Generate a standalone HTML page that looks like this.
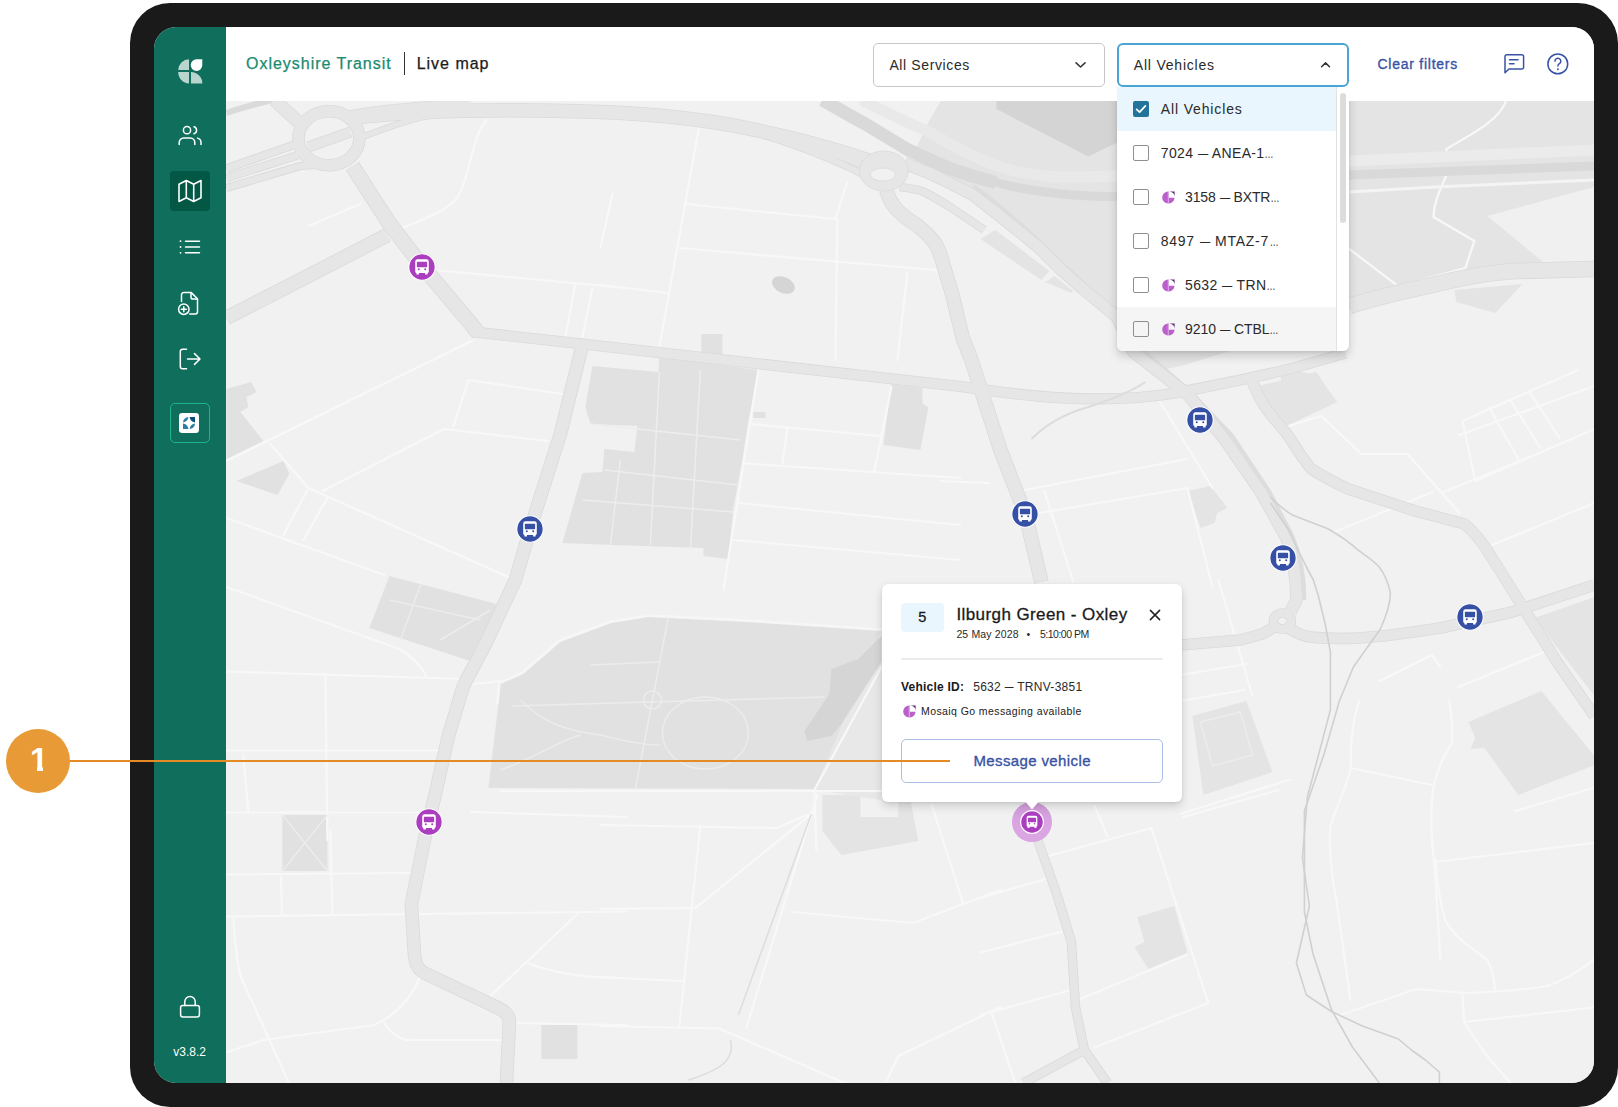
<!DOCTYPE html>
<html lang="en">
<head>
<meta charset="utf-8">
<title>Oxleyshire Transit – Live map</title>
<style>
*{box-sizing:border-box;margin:0;padding:0}
html,body{width:1618px;height:1107px;overflow:hidden;background:#fff}
body{position:relative;font-family:"Liberation Sans",Arial,sans-serif;color:#222}
.abs{position:absolute}
#bezel{position:absolute;left:129.6px;top:3px;width:1488px;height:1104px;background:#1a1a1a;border-radius:40px}
#screen{position:absolute;left:153.6px;top:27px;width:1440.4px;height:1056px;border-radius:22px;overflow:hidden;background:#f1f1f1}
#pg{position:absolute;left:-153.6px;top:-27px;width:1618px;height:1107px}
#sidebar{position:absolute;left:0;top:0;width:72px;height:1056px;background:#0f6e5c}
#header{position:absolute;left:72px;top:0;width:1369px;height:74px;background:#fff}
.t{position:absolute;white-space:nowrap;line-height:1}
.d{display:inline-block;transform:scaleX(.73);margin:0 -0.135em}
.e{display:inline-block;transform:scaleX(.64);margin:0 -0.18em}
.cb{position:absolute;left:16px;width:16px;height:16px;border:1px solid #8f8f8f;border-radius:2px}
#callout{position:absolute;left:6.1px;top:729.1px;width:63.8px;height:63.8px;border-radius:50%;background:#e89a37}
#cline{position:absolute;left:68px;top:760.1px;width:882px;height:2px;background:#e48b24}
</style>
</head>
<body>
<div id="bezel"></div>
<div id="screen">
<svg id="mapsvg" style="position:absolute;left:0;top:0" width="1440.4" height="1056" viewBox="153.6 27 1440.4 1056">
<rect x="225" y="100" width="1370" height="984" fill="#f1f1f1"/>
<!-- ===== zones ===== -->
<g fill="#e4e4e4">
 <!-- NE dark industrial zone -->
 <path d="M941 100 L1594 100 L1594 268 C1560 268 1520 270 1480 276 C1420 286 1380 300 1340 312 C1290 330 1230 352 1180 366 L1150 372 L1133 352 L1116 317 L1082 289 L1060 269 L1038 247 L1017 230 L995 213 L973 195 L930 174 L915 150 L928 122 Z"/>
 <path d="M1254 387 L1316 372 L1336 402 L1284 427 Z"/>
 <path d="M1280 367 L1315 375 L1337 402 L1283 427 Z"/>
 <path d="M1454 290 L1522 284 L1495 313 L1456 302 Z"/>
 <path d="M1534 618 L1594 597 L1594 696 Z"/>
 <path d="M1468 722 L1541 691 L1594 756 L1594 765 L1518 795 L1484 748 L1470 749 L1475 738 Z"/>
 <path d="M1192 716 L1246 701 L1272 772 L1203 795 Z"/>
 <path d="M1137 917 L1174 906 L1187 953 L1148 969 L1134 947 L1144 942 Z"/>
 <path d="M1188 491 L1210 486 L1227 508 L1217 513 L1214 523 L1200 528 Z"/>
 <path d="M822 795 L860 795 L860 817 L898 817 L898 795 L909 795 L918 841 L841 855 L822 831 Z"/>
 <path d="M980 239 L995 230 L1049 271 L1041 280 Z"/>
 <path d="M1045 282 L1054 276 L1073 291 L1071 293 Z"/>
</g>
<!-- lighter polygon inside NE zone -->
<path d="M1487 216 L1594 187 L1594 268 L1544 263 Z" fill="#f0f0f0"/>
<!-- darker polygon in NE zone -->
<path d="M996 100 L1118 100 L1118 142 L1088 156.5 L996 109 Z" fill="#d4d4d4"/>
<g fill="#e1e1e1">
 <!-- campus -->
 <path d="M592 366 L658 372 L659 357 L758 370 L755 387 L748 421 L742 459 L733 508 L728 559 L703 556 L703 548 L612 545 L562 543 L582 473 L602 472 L604 449 L634 452 L637 426 L590 424 L585 407 Z"/>
 <path d="M701 334 L722 334 L722 354 L701 354 Z"/>
 <path d="M891 384 L922 388 L922 404 L928 407 L920 450 L883 445 Z"/>
 <path d="M753 412 L765 412 L765 418 L753 418 Z"/>
 <!-- west blocks -->
 <path d="M226 389 L251 382 L256 392 L246 397 L248 407 L240 412 L263 441 L226 459 Z"/>
 <path d="M236 481 L283 461 L289 474 L277 495 Z"/>
 <!-- cemetery -->
 <path d="M389 576 L500 605 L473 662 L369 628 Z"/>
 <!-- park -->
 <path d="M488 788 L498 704 L500 684 L523 674 L560 642 L611 623 L648 617 L747 622 L881 631 L846 719 L819 778 L814 789 Z"/>
 <path d="M881 631 L881 800 L814 790 Z" fill="#e8e8e8"/>
 <!-- X square -->
 <path d="M282 815 L327 815 L327 871 L282 871 Z"/>
 <path d="M541 1025 L577 1025 L577 1059 L541 1059 Z"/>
</g>
<!-- water -->
<g fill="#d5d5d5">
 <path d="M881 636 L881 662 L841 724 L831 736 L807 741 L804 731 L829 694 L831 669 L858 659 Z"/>
 <ellipse cx="783" cy="285" rx="12" ry="8" transform="rotate(25 783 285)"/>
</g>
<!-- ===== light minor streets ===== -->
<g fill="none" stroke="#f8f8f8" stroke-width="2.2" stroke-linecap="round" stroke-linejoin="round">
 <path d="M486 120 C470 140 470 180 455 200 C440 215 415 222 399 229"/>
 <path d="M439 270.5 L572 283 L626 288 M575 283 L565 337 M592 288 L582 337 M308 226 L360 204"/>
 <path d="M699 125 L659 347 M686 204 L835 219 L847 182 M679 248 L946 271 M600 285 L667 293 M837 219 L835 360 M907 273 L897 360 M612 194 L600 248"/>
 <path d="M226 461 L473 340"/>
 <path d="M322 491 L444 429 L547 441 M270 444 L308 488 L508 577 M226 518 L384 575 M468 380 L562 394 M468 380 L453 426 M308 488 L283 535 M327 498 L303 540"/>
 <path d="M758 370 L723 590 M750 424 L881 436 M745 463.5 L960 478 M738 503 L960 525 M733 540 L960 560 M891 387 L874 471 M787 429 L782 463"/>
 <path d="M1019 491 L1187 459 M1039 513 L1187 488 M1158 399 L1212 488 M1187 488 L1212 587 M1044 491 L1073 582 M940 481 L989 483"/>
 <path d="M1462 421 L1578 370 M1459 435 L1594 386 M1475 481 L1594 429 M1443 492 L1551 448 M1462 421 L1475 481 M1489 408 L1518 459 M1510 400 L1540 448 M1529 391.5 L1559 438"/>
 <path d="M1285 427 L1321 416 L1361 454 L1407 454 L1459 513 M1489 546 L1594 503 M1334 532 L1432 492"/>
 <path d="M226 671.5 L463 679 M325 674 L327 840 M226 750.5 L441 750.5 M243 755.5 L248 812 M226 812.5 L424 812.5"/>
 <path d="M226 587 L399 649 C410 655 420 665 426 676 M473 684 L500 681 M471 812 L626 817"/>
 <path d="M500 791 L1180 791"/>
 <path d="M497 703 L499 683 L522 672.5 L559 640.5 L610.5 621.5 L648 615.5 L747 620.5 L881 629.5" stroke-width="2.6" stroke="#f6f6f6"/>
 <path d="M881 667 L814 790 L816 850"/>
 <path d="M226 874.5 L411 873 M226 916.5 L626 911.5 M330 830 L332 914 M280.5 874.5 L281.5 914 M233 919 C235 950 238 970 241 978 L288 1082"/>
 <path d="M226 1052.5 L263 1040 L374 1025 C395 1015 410 1000 419 978 M384 1023 C390 1033 400 1040 409 1040 L503 1040 M515 1023 L626 1025 M488 998 L577 914 M528 963.5 C560 975 590 978 626 978"/>
 <path d="M600 825 L776 828 L814 812 M700 825 L679 1026 M600 909 L695 908 L811 814 M600 977 L681 981 M600 1026 L719 1028.5 L844 1083"/>
 <path d="M817 795 L746 1028 M792 912 L912 923 L1000 890 M931 804 L963 904 M1000 1007 L898 1056 L885 1083"/>
 <path d="M1048 856 L1151 828 L1208 1003 L1094 1047.5 M1183 817 L1278 790 M1080 999 L1186 955 M980 898 L1045 879 M980 952.5 L1064 931 M980 1015 L1069 990.5 M1094 806 L1107 836 M991 1012 L1015 1083"/>
 <path d="M1218 580 L1252 696 M1180 675 L1246.5 664 M1180 701 L1244 690 M1180 814 L1290 779.5"/>
 <path d="M1379.5 681 L1431.5 655 L1440 667 M1457.5 687 L1544 652 M1449 701 C1452 720 1452 730 1452 742 C1440 760 1433 780 1431.5 800 C1430 830 1432 850 1434 863 L1440 960 M1434 862 L1593 843 M1515 811 L1593 788"/>
 <path d="M1359 701 C1352 720 1350 745 1350.5 768 C1345 790 1335 810 1330 826 C1328 850 1332 880 1336 900 L1350 1000 M1350.5 768 L1431.5 785"/>
 <path d="M1435 860 C1438 890 1440 905 1445 920 C1455 940 1475 950 1487 960 C1492 970 1494 980 1495 991 M1464 993 C1500 992 1520 990 1545 986.5 C1565 980 1580 970 1593 960 M1462 995 L1464 1022 L1593 1007.5 M1464 1022 C1475 1040 1485 1055 1497 1068 L1510 1083 M1337 1016 L1416 989 L1464 993"/>
 <!-- NE zone white paths -->
 <path d="M1506 100 C1500 120 1470 135 1446 149 L1446 160 M1446 175 C1440 190 1434 200 1433 217 L1474 241 L1465 268 L1395 287 M1349 249 L1395 284"/>
</g>
<!-- park paths -->
<g fill="none" stroke="#ececec" stroke-width="1.5">
 <path d="M668 617 L635 789"/>
 <path d="M512 706 L824 697"/>
 <circle cx="652" cy="700" r="9"/>
 <ellipse cx="705" cy="733" rx="43" ry="36"/>
 <path d="M520 700 C540 720 560 730 600 735 C620 740 640 745 660 745"/>
 <path d="M500 770 C530 760 560 740 580 735"/>
 <path d="M590 665 L660 662"/>
 <path d="M282 815 L327 871 M327 815 L282 871"/>
 <path d="M389 600 L480 620 M420 585 L400 640 M440 640 L490 610"/>
 <path d="M1200 722 L1240 712 L1252 755 L1212 766 Z"/>
</g>
<!-- campus paths -->
<g fill="none" stroke="#ededed" stroke-width="1.5">
 <path d="M659 372 L650 545"/>
 <path d="M590 424 L740 440"/>
 <path d="M604 470 L738 485"/>
 <path d="M582 500 L733 512"/>
 <path d="M700 370 L690 550"/>
 <path d="M620 460 L610 545"/>
</g>

<g fill="none" stroke-linecap="butt" stroke-linejoin="round">
<path d="M226 113 C240 108 255 104 272 100" stroke="#dadada" stroke-width="6"/>
<path d="M861 100 C885 112 905 122 930 132.5 C950 145 965 152 973 156 C990 164 1005 169 1017 171.5 C1035 175 1050 177 1060 177 C1080 177 1100 176.5 1117 176 L1349 161" stroke="#e9e9e9" stroke-width="11"/>
<path d="M822 100 C840 110 850 116 865 124 C880 133 895 142 908 150 C925 158 940 165 952 169.5 C968 175 982 179 995 182.5" stroke="#d9d9d9" stroke-width="13"/>
<path d="M990 181 C1005 185 1022 189 1038 191 C1055 193.5 1070 195 1082 195.5 C1095 196.5 1105 196.5 1117 196.5 L1349 175" stroke="#d9d9d9" stroke-width="9"/>
<path d="M1349 161 L1594 150" stroke="#ebebeb" stroke-width="11"/>
<path d="M1349 175 L1594 166" stroke="#d9d9d9" stroke-width="9"/>
<path d="M1349 192 L1435 187 L1594 180" stroke="#f4f4f4" stroke-width="3"/>
<path d="M973 186 C1000 205 1030 232 1060 262 C1085 285 1100 300 1120 318 L1140 348 L1187 389 L1232 436 L1268 490 L1292 536 C1302 560 1304 585 1304 600" stroke="#dddddd" stroke-width="4"/>
<path d="M352 166 L357 174 L389 223.5 L422.5 267 L469.5 322.5 L478.5 334" stroke="#dadada" stroke-width="15.6"/>
<path d="M474 332 L560 341.5 L760 364 L960 386.5 L1000 392 C1060 400 1120 402 1175 393 C1210 386 1260 377 1300 366 L1345 353" stroke="#dadada" stroke-width="11.1"/>
<path d="M226 318 L300 280 L387 235" stroke="#dadada" stroke-width="14.6"/>
<path d="M582 345 L560 434 L530 528 L515 580 L486 642 L463 686 L448 736 L434 798 L426 830 L411 904 L414 954 C415 965 418 970 424 973 L498 1008 C506 1012 509 1016 509 1022 L506 1083" stroke="#dadada" stroke-width="13.6"/>
<path d="M350 118 C420 110 500 108.5 600 112 C680 115 725 123 760 131 C790 138 820 147 840 153 L866 163" stroke="#dadada" stroke-width="14.6"/>
<path d="M770 130 C800 136 835 146 872 158" stroke="#dadada" stroke-width="7.6"/>
<path d="M770 137 C800 147 830 158 862 174" stroke="#dadada" stroke-width="7.6"/>
<path d="M886 190 C888 198 891 203 895.5 208.5 C902 216 910 221 917 225.5 C924 231 930 237 934.5 243 C939 250 941 257 943 265 L952 295 L962.5 338.5 L971 360 L1000 450 L1025 514 L1041 582" stroke="#dadada" stroke-width="14.6"/>
<path d="M899 187 C908 188 915 189 921.5 191 C932 196 942 202 952 208.5 L984 230" stroke="#dadada" stroke-width="8.6"/>
<path d="M904 163 C913 167 921 170 930 173.5 C945 181 960 188 973.5 195.5 L995 212.5 L1017 230 L1038.5 247.5 L1060 269 L1082 288.5 L1116.5 317 L1133 352 L1187 394 L1224 439 L1261 493 L1286 538 C1294 560 1296 580 1296 600 L1290 612" stroke="#dadada" stroke-width="12.6"/>
<path d="M1251 379 C1255 390 1260 400 1267 410.5 C1273 418 1279 425 1285.5 432.5 C1294 445 1299 453 1304 460 C1306 463 1308 466 1311 469 C1325 478 1335 483 1348 489 L1415 511 L1464 524 C1474 532 1484 545 1491 557 L1518 600 L1556 661 L1594 716" stroke="#dadada" stroke-width="11.6"/>
<path d="M1180 645 L1240 640 L1262 634 L1274 627 M1288 628 C1296 633 1302 636 1310 637 C1340 640 1360 638 1382 636 C1400 634 1420 631 1440 628 L1512 612 L1594 585" stroke="#dadada" stroke-width="11.6"/>
<path d="M1032 825 L1056 893 L1071 942 L1075 1007 L1084 1050 L1107 1083 M1084 1050 L1023 1083" stroke="#dadada" stroke-width="9.6"/>
<path d="M1349 306 C1380 296 1410 290 1436 284 C1465 277 1490 272 1517 271 L1594 269" stroke="#dadada" stroke-width="16.6"/>
<path d="M226 168.5 L296 144" stroke="#dadada" stroke-width="8.6"/>
<path d="M226 178 L298 155" stroke="#dadada" stroke-width="8.6"/>
<path d="M226 188 L300 166 L345 163" stroke="#dadada" stroke-width="8.1"/>
<path d="M346 114 C380 108 420 104 470 102" stroke="#dadada" stroke-width="6.6"/>
<path d="M362 137 C390 126 410 119 432 115" stroke="#dadada" stroke-width="6.6"/>
<path d="M308 147 L350 132" stroke="#dadada" stroke-width="11.1"/>
<path d="M274 100 L298 122" stroke="#dadada" stroke-width="13.6"/>
<ellipse cx="328.5" cy="138.3" rx="30.5" ry="27" stroke="#dadada" stroke-width="12.6"/>
<ellipse cx="1282" cy="621" rx="9" ry="8" stroke="#dadada" stroke-width="9.6"/>
<path d="M352 166 L357 174 L389 223.5 L422.5 267 L469.5 322.5 L478.5 334" stroke="#e6e6e6" stroke-width="14"/>
<path d="M474 332 L560 341.5 L760 364 L960 386.5 L1000 392 C1060 400 1120 402 1175 393 C1210 386 1260 377 1300 366 L1345 353" stroke="#e6e6e6" stroke-width="9.5"/>
<path d="M226 318 L300 280 L387 235" stroke="#e6e6e6" stroke-width="13"/>
<path d="M582 345 L560 434 L530 528 L515 580 L486 642 L463 686 L448 736 L434 798 L426 830 L411 904 L414 954 C415 965 418 970 424 973 L498 1008 C506 1012 509 1016 509 1022 L506 1083" stroke="#e6e6e6" stroke-width="12"/>
<path d="M350 118 C420 110 500 108.5 600 112 C680 115 725 123 760 131 C790 138 820 147 840 153 L866 163" stroke="#e6e6e6" stroke-width="13"/>
<path d="M770 130 C800 136 835 146 872 158" stroke="#e6e6e6" stroke-width="6"/>
<path d="M770 137 C800 147 830 158 862 174" stroke="#e6e6e6" stroke-width="6"/>
<path d="M886 190 C888 198 891 203 895.5 208.5 C902 216 910 221 917 225.5 C924 231 930 237 934.5 243 C939 250 941 257 943 265 L952 295 L962.5 338.5 L971 360 L1000 450 L1025 514 L1041 582" stroke="#e6e6e6" stroke-width="13"/>
<path d="M899 187 C908 188 915 189 921.5 191 C932 196 942 202 952 208.5 L984 230" stroke="#e6e6e6" stroke-width="7"/>
<path d="M904 163 C913 167 921 170 930 173.5 C945 181 960 188 973.5 195.5 L995 212.5 L1017 230 L1038.5 247.5 L1060 269 L1082 288.5 L1116.5 317 L1133 352 L1187 394 L1224 439 L1261 493 L1286 538 C1294 560 1296 580 1296 600 L1290 612" stroke="#e6e6e6" stroke-width="11"/>
<path d="M1251 379 C1255 390 1260 400 1267 410.5 C1273 418 1279 425 1285.5 432.5 C1294 445 1299 453 1304 460 C1306 463 1308 466 1311 469 C1325 478 1335 483 1348 489 L1415 511 L1464 524 C1474 532 1484 545 1491 557 L1518 600 L1556 661 L1594 716" stroke="#e6e6e6" stroke-width="10"/>
<path d="M1180 645 L1240 640 L1262 634 L1274 627 M1288 628 C1296 633 1302 636 1310 637 C1340 640 1360 638 1382 636 C1400 634 1420 631 1440 628 L1512 612 L1594 585" stroke="#e6e6e6" stroke-width="10"/>
<path d="M1032 825 L1056 893 L1071 942 L1075 1007 L1084 1050 L1107 1083 M1084 1050 L1023 1083" stroke="#e6e6e6" stroke-width="8"/>
<path d="M1349 306 C1380 296 1410 290 1436 284 C1465 277 1490 272 1517 271 L1594 269" stroke="#e6e6e6" stroke-width="15"/>
<path d="M226 168.5 L296 144" stroke="#e6e6e6" stroke-width="7"/>
<path d="M226 178 L298 155" stroke="#e6e6e6" stroke-width="7"/>
<path d="M226 188 L300 166 L345 163" stroke="#e6e6e6" stroke-width="6.5"/>
<path d="M346 114 C380 108 420 104 470 102" stroke="#e6e6e6" stroke-width="5"/>
<path d="M362 137 C390 126 410 119 432 115" stroke="#e6e6e6" stroke-width="5"/>
<path d="M308 147 L350 132" stroke="#e6e6e6" stroke-width="9.5"/>
<path d="M274 100 L298 122" stroke="#e6e6e6" stroke-width="12"/>
<ellipse cx="328.5" cy="138.3" rx="30.5" ry="27" stroke="#e6e6e6" stroke-width="11"/>
<ellipse cx="1282" cy="621" rx="9" ry="8" stroke="#e6e6e6" stroke-width="8"/>
<ellipse cx="883.5" cy="171" rx="24.5" ry="20" fill="#e6e6e6" stroke="#dadada" stroke-width="0.8"/>
<ellipse cx="882.5" cy="174.5" rx="12.5" ry="6.5" fill="#f1f1f1" stroke="#dadada" stroke-width="0.8"/>
<path d="M1270 503 L1287 528 L1306 567 L1313 580 L1318 596 L1325 625 L1330 652 L1330 710 L1307 797 L1302 858 L1309 906 L1296 963 L1300 976 L1306 995 L1331 1011.5 L1362 1026 L1398 1039 L1411 1050 L1425 1060 L1439 1072 L1439 1083" stroke="#d0d0d0" stroke-width="1.6"/>
<path d="M1270 497 C1280 507 1285 511 1292 515 L1328 529 C1340 536 1350 543 1357 549.5 C1366 556 1373 561 1378.5 566.5 C1385 575 1388 583 1390 593 C1390 605 1385 618 1380 629 L1353 667 L1339 701 L1324 753 L1304 811 L1304 912 L1312.5 953.5 L1331 1009.5 L1352 1047 L1379 1083" stroke="#d0d0d0" stroke-width="1.6"/>
<path d="M1031 439 C1050 420 1070 412 1088 407 C1110 400 1130 392 1145 382" stroke="#dcdcdc" stroke-width="2"/>
<path d="M811 814 L738 1015" stroke="#dddddd" stroke-width="1.5"/>
<path d="M730 1040 C735 1060 720 1070 688 1080" stroke="#dddddd" stroke-width="1.5"/>
</g>
</svg>
<div id="header"></div>
<div id="sidebar">
 <!-- logo -->
 <svg class="abs" style="left:24px;top:32px" width="25" height="25" viewBox="0 0 25 25">
  <path d="M11 0.3 A11 11 0 0 0 0.2 11 L11 11 Z" fill="#b9d6ce"/>
  <path d="M0.2 13 A11.5 11.5 0 0 0 11 24.6 L11 13 Z" fill="#b9d6ce"/>
  <path d="M13 13 L13 24.6 L24.4 24.6 A11.5 11.5 0 0 0 13 13 Z" fill="#b9d6ce"/>
  <path d="M24.3 0.3 L18.6 0.3 A5.8 5.8 0 1 0 24.3 6 Z" fill="#ffffff"/>
 </svg>
 <!-- users -->
 <svg class="abs" style="left:24px;top:96px" width="24" height="24" viewBox="0 0 24 24" fill="none" stroke="#fff" stroke-width="1.5" stroke-linecap="round" stroke-linejoin="round">
  <circle cx="9" cy="7.2" r="3.6"/><path d="M1.2 21.5 v-2 a4.6 4.6 0 0 1 4.6 -4.6 h6.4 a4.6 4.6 0 0 1 4.6 4.6 v2"/>
  <path d="M16 3.8 a3.6 3.6 0 0 1 0 6.9"/><path d="M23 21.5 v-2 a4.6 4.6 0 0 0 -3.4 -4.4"/>
 </svg>
 <!-- map active -->
 <div class="abs" style="left:16px;top:144px;width:40px;height:40px;border-radius:4px;background:#035745"></div>
 <svg class="abs" style="left:24px;top:152px" width="24" height="24" viewBox="0 0 24 24" fill="none" stroke="#fff" stroke-width="1.6" stroke-linejoin="round">
  <path d="M1 5.2 L8.3 1.5 L15.7 5.2 L23 1.5 V18.8 L15.7 22.5 L8.3 18.8 L1 22.5 Z"/><path d="M8.3 1.5 V18.8 M15.7 5.2 V22.5"/>
 </svg>
 <!-- list -->
 <svg class="abs" style="left:24px;top:208px" width="24" height="24" viewBox="0 0 24 24" fill="none" stroke="#fff" stroke-width="1.5" stroke-linecap="round">
  <path d="M7.5 6.2 H21.5 M7.5 12 H21.5 M7.5 17.8 H21.5"/><path d="M2.5 6.2 h0.01 M2.5 12 h0.01 M2.5 17.8 h0.01" stroke-width="1.8"/>
 </svg>
 <!-- file plus -->
 <svg class="abs" style="left:23px;top:264px" width="24" height="25" viewBox="0 0 24 25" fill="none" stroke="#fff" stroke-width="1.5" stroke-linecap="round" stroke-linejoin="round">
  <path d="M4.5 10.5 V3.8 a2.2 2.2 0 0 1 2.2 -2.2 h7.6 l6.2 6.2 v12.9 a2.2 2.2 0 0 1 -2.2 2.2 h-5.6"/><path d="M14 1.8 v4.4 a1.8 1.8 0 0 0 1.8 1.8 h4.4"/>
  <circle cx="6.8" cy="18.2" r="5.2"/><path d="M6.8 15.7 v5 M4.3 18.2 h5"/>
 </svg>
 <!-- logout -->
 <svg class="abs" style="left:24px;top:320px" width="24" height="24" viewBox="0 0 24 24" fill="none" stroke="#fff" stroke-width="1.5" stroke-linecap="round" stroke-linejoin="round">
  <path d="M8.5 2.2 H4.6 a2.3 2.3 0 0 0 -2.3 2.3 v15 a2.3 2.3 0 0 0 2.3 2.3 H8.5"/><path d="M9.5 12 H22 M16.5 6.6 L22 12 L16.5 17.4"/>
 </svg>
 <!-- app box -->
 <div class="abs" style="left:16px;top:376.4px;width:40px;height:39.6px;border-radius:5px;border:1.2px solid #1fb394"></div>
 <svg class="abs" style="left:25.6px;top:386px" width="20" height="20" viewBox="0 0 20 20">
  <rect x="0" y="0" width="20" height="20" rx="3.2" fill="#fff"/>
  <path d="M9.4 4 C9 7 7 9 4 9.4 A5.6 5.6 0 0 1 9.4 4 Z" fill="#2b7da6"/>
  <path d="M16 4 V9.4 C13 9 11 7 10.6 4 Z" fill="#06507c"/>
  <path d="M4 16 V10.6 C7 11 9 13 9.4 16 Z" fill="#2b7da6"/>
  <path d="M10.6 16 C11 13 13 11 16 10.6 A5.6 5.6 0 0 1 10.6 16 Z" fill="#2b7da6"/>
 </svg>
 <!-- lock -->
 <svg class="abs" style="left:24px;top:968px" width="24" height="24" viewBox="0 0 24 24" fill="none" stroke="#fff" stroke-width="1.5" stroke-linecap="round" stroke-linejoin="round">
  <rect x="2.6" y="10.4" width="18.8" height="11.6" rx="2.2"/><path d="M6.8 10.4 V6.6 a5.2 5.2 0 0 1 10.4 0 V10.4"/>
 </svg>
 <div class="t" style="left:0;width:72px;text-align:center;top:1018.5px;font-size:12px;color:#fff">v3.8.2</div>
</div>

<div id="pg">
<svg class="abs" style="left:408.0px;top:253.0px" width="28" height="28" viewBox="-1 -1 28 28"><circle cx="13" cy="13" r="13.2" fill="#ab3dbf" stroke="#fff" stroke-width="1.1"/><g transform="translate(13 13) scale(1.17) translate(-13 -12.9)"><path d="M7.2 8.2 a2 2 0 0 1 2 -2 h7.6 a2 2 0 0 1 2 2 v8.6 a1.2 1.2 0 0 1 -1 1.2 v0.9 a0.5 0.5 0 0 1 -0.5 0.5 h-1.2 a0.5 0.5 0 0 1 -0.5 -0.5 v-0.8 h-5.2 v0.8 a0.5 0.5 0 0 1 -0.5 0.5 h-1.2 a0.5 0.5 0 0 1 -0.5 -0.5 v-0.9 a1.2 1.2 0 0 1 -1 -1.2 Z M8.6 9 v3.6 a0.6 0.6 0 0 0 0.6 0.6 h7.6 a0.6 0.6 0 0 0 0.6 -0.6 V9 a0.6 0.6 0 0 0 -0.6 -0.6 H9.2 a0.6 0.6 0 0 0 -0.6 0.6 Z M9.4 14.9 a0.85 0.85 0 1 0 1.7 0 a0.85 0.85 0 1 0 -1.7 0 Z M14.9 14.9 a0.85 0.85 0 1 0 1.7 0 a0.85 0.85 0 1 0 -1.7 0 Z" fill="#fff" fill-rule="evenodd"/></g></svg>
<svg class="abs" style="left:515.7px;top:514.5px" width="28" height="28" viewBox="-1 -1 28 28"><circle cx="13" cy="13" r="13.2" fill="#3650a6" stroke="#fff" stroke-width="1.1"/><g transform="translate(13 13) scale(1.17) translate(-13 -12.9)"><path d="M7.2 8.2 a2 2 0 0 1 2 -2 h7.6 a2 2 0 0 1 2 2 v8.6 a1.2 1.2 0 0 1 -1 1.2 v0.9 a0.5 0.5 0 0 1 -0.5 0.5 h-1.2 a0.5 0.5 0 0 1 -0.5 -0.5 v-0.8 h-5.2 v0.8 a0.5 0.5 0 0 1 -0.5 0.5 h-1.2 a0.5 0.5 0 0 1 -0.5 -0.5 v-0.9 a1.2 1.2 0 0 1 -1 -1.2 Z M8.6 9 v3.6 a0.6 0.6 0 0 0 0.6 0.6 h7.6 a0.6 0.6 0 0 0 0.6 -0.6 V9 a0.6 0.6 0 0 0 -0.6 -0.6 H9.2 a0.6 0.6 0 0 0 -0.6 0.6 Z M9.4 14.9 a0.85 0.85 0 1 0 1.7 0 a0.85 0.85 0 1 0 -1.7 0 Z M14.9 14.9 a0.85 0.85 0 1 0 1.7 0 a0.85 0.85 0 1 0 -1.7 0 Z" fill="#fff" fill-rule="evenodd"/></g></svg>
<svg class="abs" style="left:1185.8px;top:406.1px" width="28" height="28" viewBox="-1 -1 28 28"><circle cx="13" cy="13" r="13.2" fill="#3650a6" stroke="#fff" stroke-width="1.1"/><g transform="translate(13 13) scale(1.17) translate(-13 -12.9)"><path d="M7.2 8.2 a2 2 0 0 1 2 -2 h7.6 a2 2 0 0 1 2 2 v8.6 a1.2 1.2 0 0 1 -1 1.2 v0.9 a0.5 0.5 0 0 1 -0.5 0.5 h-1.2 a0.5 0.5 0 0 1 -0.5 -0.5 v-0.8 h-5.2 v0.8 a0.5 0.5 0 0 1 -0.5 0.5 h-1.2 a0.5 0.5 0 0 1 -0.5 -0.5 v-0.9 a1.2 1.2 0 0 1 -1 -1.2 Z M8.6 9 v3.6 a0.6 0.6 0 0 0 0.6 0.6 h7.6 a0.6 0.6 0 0 0 0.6 -0.6 V9 a0.6 0.6 0 0 0 -0.6 -0.6 H9.2 a0.6 0.6 0 0 0 -0.6 0.6 Z M9.4 14.9 a0.85 0.85 0 1 0 1.7 0 a0.85 0.85 0 1 0 -1.7 0 Z M14.9 14.9 a0.85 0.85 0 1 0 1.7 0 a0.85 0.85 0 1 0 -1.7 0 Z" fill="#fff" fill-rule="evenodd"/></g></svg>
<svg class="abs" style="left:1010.7px;top:499.9px" width="28" height="28" viewBox="-1 -1 28 28"><circle cx="13" cy="13" r="13.2" fill="#3650a6" stroke="#fff" stroke-width="1.1"/><g transform="translate(13 13) scale(1.17) translate(-13 -12.9)"><path d="M7.2 8.2 a2 2 0 0 1 2 -2 h7.6 a2 2 0 0 1 2 2 v8.6 a1.2 1.2 0 0 1 -1 1.2 v0.9 a0.5 0.5 0 0 1 -0.5 0.5 h-1.2 a0.5 0.5 0 0 1 -0.5 -0.5 v-0.8 h-5.2 v0.8 a0.5 0.5 0 0 1 -0.5 0.5 h-1.2 a0.5 0.5 0 0 1 -0.5 -0.5 v-0.9 a1.2 1.2 0 0 1 -1 -1.2 Z M8.6 9 v3.6 a0.6 0.6 0 0 0 0.6 0.6 h7.6 a0.6 0.6 0 0 0 0.6 -0.6 V9 a0.6 0.6 0 0 0 -0.6 -0.6 H9.2 a0.6 0.6 0 0 0 -0.6 0.6 Z M9.4 14.9 a0.85 0.85 0 1 0 1.7 0 a0.85 0.85 0 1 0 -1.7 0 Z M14.9 14.9 a0.85 0.85 0 1 0 1.7 0 a0.85 0.85 0 1 0 -1.7 0 Z" fill="#fff" fill-rule="evenodd"/></g></svg>
<svg class="abs" style="left:1269.2px;top:543.7px" width="28" height="28" viewBox="-1 -1 28 28"><circle cx="13" cy="13" r="13.2" fill="#3650a6" stroke="#fff" stroke-width="1.1"/><g transform="translate(13 13) scale(1.17) translate(-13 -12.9)"><path d="M7.2 8.2 a2 2 0 0 1 2 -2 h7.6 a2 2 0 0 1 2 2 v8.6 a1.2 1.2 0 0 1 -1 1.2 v0.9 a0.5 0.5 0 0 1 -0.5 0.5 h-1.2 a0.5 0.5 0 0 1 -0.5 -0.5 v-0.8 h-5.2 v0.8 a0.5 0.5 0 0 1 -0.5 0.5 h-1.2 a0.5 0.5 0 0 1 -0.5 -0.5 v-0.9 a1.2 1.2 0 0 1 -1 -1.2 Z M8.6 9 v3.6 a0.6 0.6 0 0 0 0.6 0.6 h7.6 a0.6 0.6 0 0 0 0.6 -0.6 V9 a0.6 0.6 0 0 0 -0.6 -0.6 H9.2 a0.6 0.6 0 0 0 -0.6 0.6 Z M9.4 14.9 a0.85 0.85 0 1 0 1.7 0 a0.85 0.85 0 1 0 -1.7 0 Z M14.9 14.9 a0.85 0.85 0 1 0 1.7 0 a0.85 0.85 0 1 0 -1.7 0 Z" fill="#fff" fill-rule="evenodd"/></g></svg>
<svg class="abs" style="left:1455.5px;top:602.6px" width="28" height="28" viewBox="-1 -1 28 28"><circle cx="13" cy="13" r="13.2" fill="#3650a6" stroke="#fff" stroke-width="1.1"/><g transform="translate(13 13) scale(1.17) translate(-13 -12.9)"><path d="M7.2 8.2 a2 2 0 0 1 2 -2 h7.6 a2 2 0 0 1 2 2 v8.6 a1.2 1.2 0 0 1 -1 1.2 v0.9 a0.5 0.5 0 0 1 -0.5 0.5 h-1.2 a0.5 0.5 0 0 1 -0.5 -0.5 v-0.8 h-5.2 v0.8 a0.5 0.5 0 0 1 -0.5 0.5 h-1.2 a0.5 0.5 0 0 1 -0.5 -0.5 v-0.9 a1.2 1.2 0 0 1 -1 -1.2 Z M8.6 9 v3.6 a0.6 0.6 0 0 0 0.6 0.6 h7.6 a0.6 0.6 0 0 0 0.6 -0.6 V9 a0.6 0.6 0 0 0 -0.6 -0.6 H9.2 a0.6 0.6 0 0 0 -0.6 0.6 Z M9.4 14.9 a0.85 0.85 0 1 0 1.7 0 a0.85 0.85 0 1 0 -1.7 0 Z M14.9 14.9 a0.85 0.85 0 1 0 1.7 0 a0.85 0.85 0 1 0 -1.7 0 Z" fill="#fff" fill-rule="evenodd"/></g></svg>
<svg class="abs" style="left:414.6px;top:807.6px" width="28" height="28" viewBox="-1 -1 28 28"><circle cx="13" cy="13" r="13.2" fill="#ab3dbf" stroke="#fff" stroke-width="1.1"/><g transform="translate(13 13) scale(1.17) translate(-13 -12.9)"><path d="M7.2 8.2 a2 2 0 0 1 2 -2 h7.6 a2 2 0 0 1 2 2 v8.6 a1.2 1.2 0 0 1 -1 1.2 v0.9 a0.5 0.5 0 0 1 -0.5 0.5 h-1.2 a0.5 0.5 0 0 1 -0.5 -0.5 v-0.8 h-5.2 v0.8 a0.5 0.5 0 0 1 -0.5 0.5 h-1.2 a0.5 0.5 0 0 1 -0.5 -0.5 v-0.9 a1.2 1.2 0 0 1 -1 -1.2 Z M8.6 9 v3.6 a0.6 0.6 0 0 0 0.6 0.6 h7.6 a0.6 0.6 0 0 0 0.6 -0.6 V9 a0.6 0.6 0 0 0 -0.6 -0.6 H9.2 a0.6 0.6 0 0 0 -0.6 0.6 Z M9.4 14.9 a0.85 0.85 0 1 0 1.7 0 a0.85 0.85 0 1 0 -1.7 0 Z M14.9 14.9 a0.85 0.85 0 1 0 1.7 0 a0.85 0.85 0 1 0 -1.7 0 Z" fill="#fff" fill-rule="evenodd"/></g></svg>
<!-- selected marker halo -->
<div class="abs" style="left:1011.7px;top:802.3px;width:40px;height:40px;border-radius:50%;background:linear-gradient(#cf9ad8,#daa5e2 60%)"></div>
<!-- popup card -->
<div class="abs" style="left:882.3px;top:583.6px;width:300px;height:218.3px;background:#fff;border-radius:6px;box-shadow:0 4px 10px rgba(0,0,0,.15),0 1px 3px rgba(0,0,0,.08)"></div>
<svg class="abs" style="left:1023.7px;top:801.4px" width="16" height="9" viewBox="0 0 16 9"><path d="M0.8 0 H15.2 L8 8.4 Z" fill="#fff"/></svg>
<div class="abs" style="left:901.1px;top:603.3px;width:42.7px;height:28.8px;border-radius:4px;background:#e9f6fd"></div>
<svg class="abs" style="left:1148px;top:608px" width="14" height="14" viewBox="0 0 14 14" fill="none" stroke="#222" stroke-width="1.5" stroke-linecap="round"><path d="M2.4 2.4 L11.6 11.6 M11.6 2.4 L2.4 11.6"/></svg>
<div class="abs" style="left:901.1px;top:658.3px;width:262px;height:1.5px;background:#ececec"></div>
<svg class="abs mq" style="left:902.5px;top:704.6px" width="13" height="13" viewBox="0 0 13 13"><path d="M6.3 0.4 A6.1 6.1 0 0 0 6.3 12.6 Z" fill="#bb5fcb"/><rect x="5.7" y="0.45" width="1.2" height="12.1" fill="#d9a3e2"/><path d="M6.9 6.8 L12.55 6.8 A6.1 6.1 0 0 1 6.9 12.58 Z" fill="#bb5fcb"/><path d="M7.3 0.4 L12.6 0.4 L12.6 5.8 A5.4 5.4 0 0 0 7.3 0.4 Z" fill="#5e246e"/></svg>
<div class="abs" style="left:901.1px;top:739.2px;width:262px;height:43.5px;border:1px solid #a9bde6;border-radius:5px;background:#fff"></div>
<svg class="abs" style="left:1019.7px;top:810.3px" width="24" height="24" viewBox="0 0 26 26"><circle cx="13" cy="13" r="12.3" fill="#ab3dbf" stroke="#fff" stroke-width="1.3"/><g><path d="M7.2 8.2 a2 2 0 0 1 2 -2 h7.6 a2 2 0 0 1 2 2 v8.6 a1.2 1.2 0 0 1 -1 1.2 v0.9 a0.5 0.5 0 0 1 -0.5 0.5 h-1.2 a0.5 0.5 0 0 1 -0.5 -0.5 v-0.8 h-5.2 v0.8 a0.5 0.5 0 0 1 -0.5 0.5 h-1.2 a0.5 0.5 0 0 1 -0.5 -0.5 v-0.9 a1.2 1.2 0 0 1 -1 -1.2 Z M8.6 9 v3.6 a0.6 0.6 0 0 0 0.6 0.6 h7.6 a0.6 0.6 0 0 0 0.6 -0.6 V9 a0.6 0.6 0 0 0 -0.6 -0.6 H9.2 a0.6 0.6 0 0 0 -0.6 0.6 Z M9.4 14.9 a0.85 0.85 0 1 0 1.7 0 a0.85 0.85 0 1 0 -1.7 0 Z M14.9 14.9 a0.85 0.85 0 1 0 1.7 0 a0.85 0.85 0 1 0 -1.7 0 Z" fill="#fff" fill-rule="evenodd"/></g></svg>
<!-- header controls (page coordinates inside #pg) -->
<div class="abs" style="left:404px;top:52px;width:1px;height:22.5px;background:#333"></div>
<div class="abs" style="left:873.2px;top:43.2px;width:231.6px;height:43.4px;border:1px solid #c6c6c6;border-radius:5px;background:#fff"></div>
<svg class="abs" style="left:1074px;top:60px" width="13" height="10" viewBox="0 0 13 10" fill="none" stroke="#333" stroke-width="1.5" stroke-linecap="round" stroke-linejoin="round"><path d="M2.05 2.85 L6.55 7.05 L11.05 2.85"/></svg>
<!-- dropdown panel -->
<div class="abs" style="left:1080px;top:101px;width:310px;height:300px;overflow:hidden"><div class="abs" style="left:37.2px;top:-15px;width:231.4px;height:265px;border-radius:0 0 6px 6px;box-shadow:0 5px 10px rgba(0,0,0,.17),0 1px 3px rgba(0,0,0,.08)"></div></div>
<div id="dd" class="abs" style="left:1117.2px;top:86px;width:231.4px;height:265px;background:#fff;border-radius:0 0 6px 6px;overflow:hidden">
 <div class="abs" style="left:0;top:1px;width:219px;height:44px;background:#e9f6fd"></div>
 <div class="abs" style="left:0;top:221px;width:219px;height:44px;background:#f5f5f5"></div>
 <div class="abs" style="left:219px;top:0;width:1px;height:265px;background:#e2e2e2"></div>
 <div class="abs" style="left:222.6px;top:6.5px;width:6px;height:130px;border-radius:3px;background:#dcdcdc"></div>
 <!-- checkboxes -->
 <div class="abs" style="left:16px;top:15px;width:16px;height:16px;border-radius:2px;background:#23749b"></div>
 <svg class="abs" style="left:16px;top:15px" width="16" height="16" viewBox="0 0 16 16" fill="none" stroke="#fff" stroke-width="1.7" stroke-linecap="round" stroke-linejoin="round"><path d="M3.6 8.3 L6.6 11.2 L12.4 4.9"/></svg>
 <div class="cb" style="top:59px"></div>
 <div class="cb" style="top:103px"></div>
 <div class="cb" style="top:147px"></div>
 <div class="cb" style="top:191px"></div>
 <div class="cb" style="top:235px"></div>
</div>
<!-- All Vehicles select (focused) -->
<div class="abs" style="left:1117.2px;top:43.2px;width:231.4px;height:43.4px;border:2px solid #4aa5d4;border-radius:6px;background:#fff"></div>
<svg class="abs" style="left:1318.6px;top:59px" width="13" height="10" viewBox="0 0 13 10" fill="none" stroke="#333" stroke-width="1.5" stroke-linecap="round" stroke-linejoin="round"><path d="M2.6 7.8 L6.55 3.9 L10.5 7.8"/></svg>
<!-- mosaiq icons in dropdown -->
<svg class="abs mq" style="left:1162.4px;top:190.5px" width="13" height="13" viewBox="0 0 13 13"><path d="M6.3 0.4 A6.1 6.1 0 0 0 6.3 12.6 Z" fill="#bb5fcb"/><rect x="5.7" y="0.45" width="1.2" height="12.1" fill="#d9a3e2"/><path d="M6.9 6.8 L12.55 6.8 A6.1 6.1 0 0 1 6.9 12.58 Z" fill="#bb5fcb"/><path d="M7.3 0.4 L12.6 0.4 L12.6 5.8 A5.4 5.4 0 0 0 7.3 0.4 Z" fill="#5e246e"/></svg>
<svg class="abs mq" style="left:1162.4px;top:278.5px" width="13" height="13" viewBox="0 0 13 13"><path d="M6.3 0.4 A6.1 6.1 0 0 0 6.3 12.6 Z" fill="#bb5fcb"/><rect x="5.7" y="0.45" width="1.2" height="12.1" fill="#d9a3e2"/><path d="M6.9 6.8 L12.55 6.8 A6.1 6.1 0 0 1 6.9 12.58 Z" fill="#bb5fcb"/><path d="M7.3 0.4 L12.6 0.4 L12.6 5.8 A5.4 5.4 0 0 0 7.3 0.4 Z" fill="#5e246e"/></svg>
<svg class="abs mq" style="left:1162.4px;top:322.5px" width="13" height="13" viewBox="0 0 13 13"><path d="M6.3 0.4 A6.1 6.1 0 0 0 6.3 12.6 Z" fill="#bb5fcb"/><rect x="5.7" y="0.45" width="1.2" height="12.1" fill="#d9a3e2"/><path d="M6.9 6.8 L12.55 6.8 A6.1 6.1 0 0 1 6.9 12.58 Z" fill="#bb5fcb"/><path d="M7.3 0.4 L12.6 0.4 L12.6 5.8 A5.4 5.4 0 0 0 7.3 0.4 Z" fill="#5e246e"/></svg>
<!-- chat icon -->
<svg class="abs" style="left:1503px;top:53px" width="22" height="22" viewBox="0 0 22 22" fill="none" stroke="#3953a4" stroke-width="1.5" stroke-linecap="round" stroke-linejoin="round"><path d="M2 19.8 V3.6 a1.8 1.8 0 0 1 1.8 -1.8 h15 a1.8 1.8 0 0 1 1.8 1.8 v10.6 a1.8 1.8 0 0 1 -1.8 1.8 H6 Z"/><path d="M6.5 6.8 H15 M6.5 10.8 H11"/></svg>
<!-- help icon -->
<svg class="abs" style="left:1546px;top:52px" width="24" height="24" viewBox="0 0 24 24" fill="none" stroke="#3953a4" stroke-width="1.5" stroke-linecap="round" stroke-linejoin="round"><circle cx="11.8" cy="11.9" r="9.9"/><path d="M9 9.2 a2.9 2.9 0 1 1 4.4 2.5 c-1 .6 -1.5 1.2 -1.5 2.3"/><path d="M11.9 17.2 h0.01" stroke-width="1.9"/></svg>

<span class="t" style="left:246.0px;top:55.8px;font-size:16px;font-weight:400;color:#1a8a6e;letter-spacing:0.980px;-webkit-text-stroke:0.25px #1a8a6e">Oxleyshire Transit</span>
<span class="t" style="left:416.7px;top:55.8px;font-size:16px;font-weight:400;color:#1a1a1a;letter-spacing:0.983px;-webkit-text-stroke:0.25px #1a1a1a">Live map</span>
<span class="t" style="left:889.4px;top:58.0px;font-size:14px;font-weight:400;color:#2a2a2a;letter-spacing:0.614px">All Services</span>
<span class="t" style="left:1133.8px;top:58.0px;font-size:14px;font-weight:400;color:#2a2a2a;letter-spacing:0.791px">All Vehicles</span>
<span class="t" style="left:1377.5px;top:56.7px;font-size:14px;font-weight:400;color:#3953a4;letter-spacing:0.742px;-webkit-text-stroke:0.35px #3953a4">Clear filters</span>
<span class="t" style="left:1160.8px;top:102.1px;font-size:14px;font-weight:400;color:#2a2a2a;letter-spacing:0.855px">All Vehicles</span>
<span class="t" style="left:1160.8px;top:146.1px;font-size:14px;font-weight:400;color:#2a2a2a;letter-spacing:0.364px">7024 <span class="d">—</span> ANEA-1<span class="e">…</span></span>
<span class="t" style="left:1185.0px;top:190.1px;font-size:14px;font-weight:400;color:#2a2a2a;letter-spacing:-0.109px">3158 <span class="d">—</span> BXTR<span class="e">…</span></span>
<span class="t" style="left:1160.8px;top:234.1px;font-size:14px;font-weight:400;color:#2a2a2a;letter-spacing:0.733px">8497 <span class="d">—</span> MTAZ-7<span class="e">…</span></span>
<span class="t" style="left:1185.0px;top:278.1px;font-size:14px;font-weight:400;color:#2a2a2a;letter-spacing:0.371px">5632 <span class="d">—</span> TRN<span class="e">…</span></span>
<span class="t" style="left:1185.0px;top:322.1px;font-size:14px;font-weight:400;color:#2a2a2a;letter-spacing:-0.032px">9210 <span class="d">—</span> CTBL<span class="e">…</span></span>
<span class="t" style="left:918.2px;top:610.1px;font-size:14.5px;font-weight:400;color:#1a1a1a;letter-spacing:0.000px;-webkit-text-stroke:0.3px #1a1a1a">5</span>
<span class="t" style="left:956.4px;top:605.9px;font-size:17px;font-weight:400;color:#1a1a1a;letter-spacing:0.414px;-webkit-text-stroke:0.3px #1a1a1a">Ilburgh Green - Oxley</span>
<span class="t" style="left:956.4px;top:629.2px;font-size:10.5px;font-weight:400;color:#2a2a2a;letter-spacing:0.138px">25 May 2028</span>
<span class="t" style="left:1026.5px;top:629.2px;font-size:10.5px;font-weight:400;color:#2a2a2a;letter-spacing:0.000px">•</span>
<span class="t" style="left:1040.0px;top:629.2px;font-size:10.5px;font-weight:400;color:#2a2a2a;letter-spacing:-0.500px">5:10:00 PM</span>
<span class="t" style="left:901.0px;top:680.8px;font-size:12px;font-weight:700;color:#1a1a1a;letter-spacing:0.230px">Vehicle ID:</span>
<span class="t" style="left:973.2px;top:680.8px;font-size:12px;font-weight:400;color:#2a2a2a;letter-spacing:0.292px">5632 <span class="d">—</span> TRNV-3851</span>
<span class="t" style="left:921.0px;top:706.0px;font-size:10.5px;font-weight:400;color:#1a1a1a;letter-spacing:0.413px">Mosaiq Go messaging available</span>
<span class="t" style="left:973.4px;top:753.3px;font-size:15px;font-weight:400;color:#3953a4;letter-spacing:0.383px;-webkit-text-stroke:0.35px #3953a4">Message vehicle</span>
</div>
</div>
<div id="cline"></div>
<div id="callout"></div>
<span class="t" style="left:30px;top:744.4px;font-size:32.5px;font-weight:700;color:#fff">1</span>
<div class="abs" style="left:28px;top:766.5px;width:8.6px;height:8px;background:#e89a37"></div>
<div class="abs" style="left:42.6px;top:766.5px;width:8px;height:8px;background:#e89a37"></div>
</body>
</html>
